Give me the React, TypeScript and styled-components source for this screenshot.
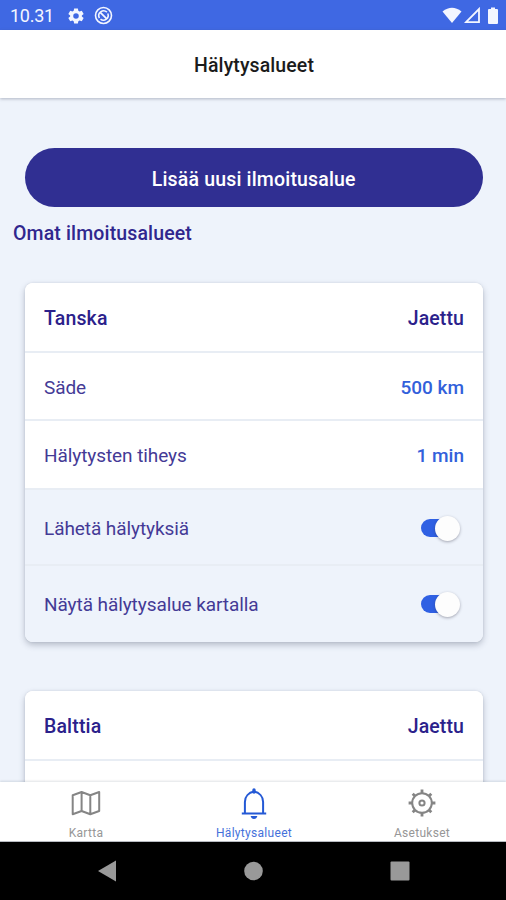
import React from "react";
import styled, { createGlobalStyle } from "styled-components";

const Global = createGlobalStyle`
  * { box-sizing: border-box; }
  body { margin: 0; font-family: Roboto, "Liberation Sans", sans-serif; background: #eef3fb; }
`;

const Screen = styled.div`
  width: 100%;
  height: 100vh;
  display: flex;
  flex-direction: column;
  overflow: hidden;
  background: #eef3fb;
`;

const StatusBar = styled.div`
  flex: 0 0 30px;
  display: flex;
  align-items: center;
  padding: 1px 6px 0 10px;
  background: #3f68e3;
  color: #f3f6ff;
`;

const Clock = styled.span`
  width: 57px;
  font-size: 18px;
  letter-spacing: -0.25px;
  line-height: 29px;
`;

const StatusIcons = styled.div<{ $gap: number; $end?: boolean }>`
  display: flex;
  align-items: center;
  gap: ${(p) => p.$gap}px;
  margin-left: ${(p) => (p.$end ? "auto" : "0")};
`;

const Header = styled.header`
  flex: 0 0 68px;
  display: flex;
  align-items: center;
  justify-content: center;
  padding: 3px 0 0 2px;
  background: #fff;
  box-shadow: 0 1px 3px rgba(60, 70, 95, 0.35);
  z-index: 1;
`;

const Title = styled.h1`
  margin: 0;
  font-size: 19.5px;
  font-weight: 500;
  letter-spacing: 0.1px;
  color: #1b1b1b;
`;

const Content = styled.main`
  flex: 1;
  min-height: 0;
  overflow: hidden;
  padding: 50px 23.5px 0 25px;
`;

const AddButton = styled.button`
  display: block;
  width: 100%;
  height: 59px;
  padding: 3px 0 0;
  border: 0;
  border-radius: 30px;
  background: #302f92;
  color: #fff;
  font: 500 19.5px Roboto, sans-serif;
  letter-spacing: 0.17px;
`;

const SectionTitle = styled.h2`
  margin: 12px 0 34px -12px;
  height: 30px;
  line-height: 30px;
  font-size: 19.5px;
  font-weight: 500;
  letter-spacing: 0.14px;
  color: #30278e;
`;

const Card = styled.section`
  margin-bottom: 49px;
  border-radius: 8px;
  overflow: hidden;
  background: #fff;
  box-shadow: 0 3px 6px rgba(65, 75, 100, 0.32), 0 0 2px rgba(65, 75, 100, 0.16);
`;

const Row = styled.div<{ $height: number; $tinted?: boolean }>`
  height: ${(p) => p.$height}px;
  display: flex;
  align-items: center;
  justify-content: space-between;
  padding: 2px 18.5px 0 19px;
  border-bottom: 2px solid #e8edf4;
  background: ${(p) => (p.$tinted ? "#eef3fb" : "#fff")};
  &:last-child { border-bottom: 0; padding-top: 0; }
`;

const Label = styled.span<{ $bold?: boolean }>`
  font-size: ${(p) => (p.$bold ? 19.5 : 19)}px;
  font-weight: ${(p) => (p.$bold ? 500 : 400)};
  letter-spacing: ${(p) => (p.$bold ? 0.15 : -0.08)}px;
  color: ${(p) => (p.$bold ? "#2b218b" : "#443a96")};
`;

const Value = styled.span<{ $blue?: boolean }>`
  font-size: ${(p) => (p.$blue ? 19 : 19.5)}px;
  font-weight: 500;
  letter-spacing: ${(p) => (p.$blue ? 0 : 0.1)}px;
  color: ${(p) => (p.$blue ? "#3260db" : "#2b218b")};
`;

const Switch = styled.span`
  width: 36px;
  height: 18px;
  margin-right: 7px;
  display: flex;
  align-items: center;
  justify-content: flex-end;
  border-radius: 9px;
  background: #2f60e3;
`;

const Thumb = styled.span`
  flex: none;
  width: 25px;
  height: 25px;
  margin-right: -3px;
  border-radius: 50%;
  background: #fdfdfd;
  box-shadow: 0 1px 3px rgba(50, 50, 70, 0.4);
`;

const Tabs = styled.nav`
  flex: 0 0 60px;
  display: grid;
  grid-template-columns: repeat(3, 1fr);
  padding-left: 2px;
  background: #fff;
  border-bottom: 1px solid #b7bbc1;
  box-shadow: 0 -1px 2px rgba(50, 60, 80, 0.15);
  z-index: 1;
`;

const Tab = styled.div<{ $active?: boolean }>`
  display: flex;
  flex-direction: column;
  align-items: center;
  padding-top: 5px;
  color: ${(p) => (p.$active ? "#2459d5" : "#858585")};
`;

const TabLabel = styled.span`
  margin-top: 6px;
  font-size: 12px;
  line-height: 16px;
  letter-spacing: 0.3px;
  white-space: nowrap;
  opacity: 0.85;
`;

const SystemNav = styled.div`
  flex: 0 0 58px;
  display: flex;
  justify-content: center;
  align-items: center;
  gap: 127px;
  padding-left: 1px;
  background: #000;
`;

const GearIcon = () => (
  <svg width="18" height="18" viewBox="0 0 24 24" fill="currentColor">
    <path fillRule="evenodd" d="M9.5 2h5l.6 3.1 1.6.9 3-1 2.5 4.3-2.4 2.1v1.3l2.4 2.1-2.5 4.3-3-1-1.6.9-.6 3h-5l-.6-3-1.6-.9-3 1-2.5-4.3 2.4-2.1v-1.3L1.8 9.3 4.3 5l3 1 1.6-.9zM12 8.3a3.7 3.7 0 1 0 0 7.4 3.7 3.7 0 0 0 0-7.4z" />
  </svg>
);

const SyncIcon = () => (
  <svg width="19" height="19" viewBox="0 0 19 19" fill="none" stroke="currentColor">
    <circle cx="9.5" cy="9.5" r="8" strokeWidth="1.6" />
    <path d="M5.4 12a4.8 4.8 0 0 1 7.5-5.8M13.8 7.5a4.8 4.8 0 0 1-7.3 5.7" strokeWidth="1.6" />
    <path d="M6.2 6.3l6.6 6.5" strokeWidth="1.8" />
  </svg>
);

const MapIcon = () => (
  <svg width="32" height="32" viewBox="0 0 32 32" fill="none" stroke="currentColor" strokeWidth="2" strokeLinejoin="round">
    <path d="M2.7 8.2L11.6 5l8.7 3.2L29.2 5v19L20.3 27.2 11.6 24 2.7 27.2zM11.6 5v19M20.3 8.2v19" />
  </svg>
);

const BellIcon = () => (
  <svg width="32" height="32" viewBox="0 0 32 32" fill="none" stroke="currentColor" strokeWidth="2">
    <path d="M3.8 26.4h24.4M6.9 26V15C6.9 9.5 10.7 5.6 16 4.6 21.3 5.6 25.1 9.5 25.1 15v11" />
    <path d="M16 5V3" strokeWidth="3.4" strokeLinecap="round" />
    <path d="M12.6 29h6.8q-.8 3-3.4 3t-3.4-3z" fill="currentColor" stroke="none" />
  </svg>
);

const SettingsIcon = () => (
  <svg width="32" height="32" viewBox="0 0 32 32" fill="none" stroke="currentColor" strokeWidth="2">
    <circle cx="16" cy="16" r="9.8" />
    <circle cx="16" cy="16" r="2.6" />
    <path d="M16 6V2.6M16 26v3.4M6 16H2.6M26 16h3.4M9 9L6.7 6.7M23 9l2.3-2.3M9 23l-2.3 2.3M23 23l2.3 2.3" strokeWidth="2.8" />
  </svg>
);

const areas = [
  { name: "Tanska", radius: "500 km", rate: "1 min" },
  { name: "Balttia", radius: null, rate: null },
];

const AreaCard = ({ name, radius, rate }: (typeof areas)[number]) => (
  <Card>
    <Row $height={70}><Label $bold>{name}</Label><Value>Jaettu</Value></Row>
    {radius ? (
      <>
        <Row $height={68}><Label>Säde</Label><Value $blue>{radius}</Value></Row>
        <Row $height={69}><Label>Hälytysten tiheys</Label><Value $blue>{rate}</Value></Row>
        <Row $height={76} $tinted><Label>Lähetä hälytyksiä</Label><Switch><Thumb /></Switch></Row>
        <Row $height={76} $tinted><Label>Näytä hälytysalue kartalla</Label><Switch><Thumb /></Switch></Row>
      </>
    ) : (
      <Row $height={68} />
    )}
  </Card>
);

export default function App() {
  return (
    <Screen>
      <Global />
      <StatusBar>
        <Clock>10.31</Clock>
        <StatusIcons $gap={9}><GearIcon /><SyncIcon /></StatusIcons>
        <StatusIcons $gap={2} $end>
          <svg width="20" height="17" viewBox="0 0 20 17" fill="currentColor"><path d="M.5 4.5Q10-3 19.5 4.5L10 16z" /></svg>
          <svg width="17" height="17" viewBox="0 0 17 17" fill="none" stroke="currentColor" strokeWidth="1.8"><path d="M2 15.2L15 2v13.2z" /></svg>
          <svg width="17" height="18" viewBox="0 0 17 18" fill="currentColor"><path d="M6 2h2V.5h4V2h2q1 0 1 1v13q0 1-1 1H6q-1 0-1-1V3q0-1 1-1z" /></svg>
        </StatusIcons>
      </StatusBar>
      <Header><Title>Hälytysalueet</Title></Header>
      <Content>
        <AddButton>Lisää uusi ilmoitusalue</AddButton>
        <SectionTitle>Omat ilmoitusalueet</SectionTitle>
        {areas.map((area) => <AreaCard key={area.name} {...area} />)}
      </Content>
      <Tabs>
        <Tab><MapIcon /><TabLabel>Kartta</TabLabel></Tab>
        <Tab $active><BellIcon /><TabLabel>Hälytysalueet</TabLabel></Tab>
        <Tab><SettingsIcon /><TabLabel>Asetukset</TabLabel></Tab>
      </Tabs>
      <SystemNav>
        <svg width="18" height="22" viewBox="0 0 18 22" fill="#999"><path d="M0 11L18 .5v21z" /></svg>
        <svg width="20" height="20" viewBox="0 0 20 20" fill="#999"><circle cx="10.5" cy="10" r="9.3" /></svg>
        <svg width="20" height="20" viewBox="0 0 20 20" fill="#999"><rect x=".5" y=".5" width="19" height="19" rx="1" /></svg>
      </SystemNav>
    </Screen>
  );
}
